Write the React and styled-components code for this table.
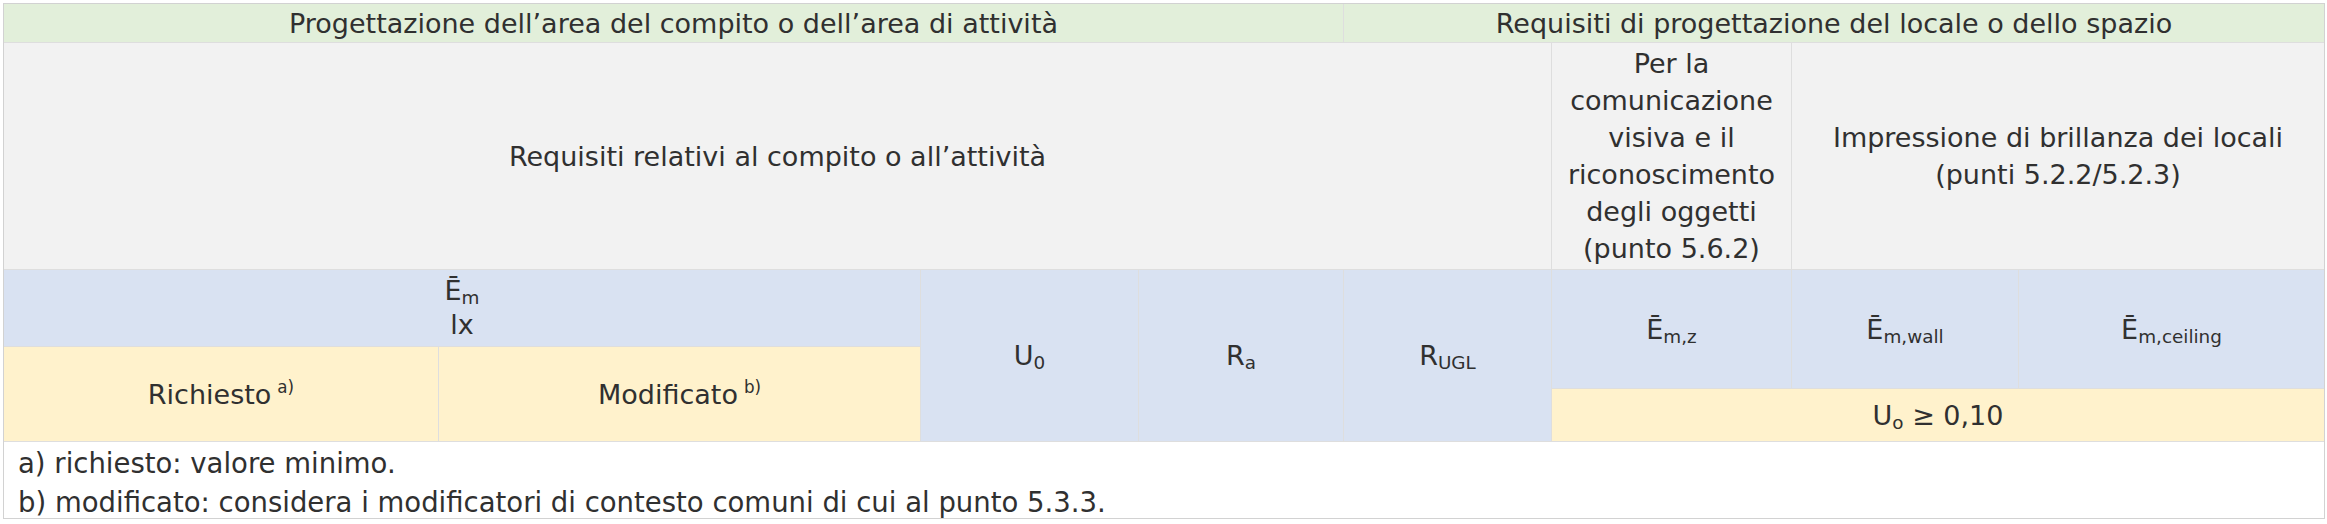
import React from 'react';
import styled, { createGlobalStyle } from 'styled-components';

const GlobalStyle = createGlobalStyle`
  body {
    margin: 0;
    background: #fff;
  }
`;

const Page = styled.div`
  padding: 3px;
`;

const Table = styled.div`
  display: grid;
  grid-template-columns: 434px 481px 217px 204px 207px 239px 226px 305px;
  grid-template-rows: 38px 226px 76px 41px 52px 76px;
  gap: 1px;
  width: 2322px;
  box-sizing: border-box;
  background: #dedede;
  border: 1px solid #d2d2d2;
  font-family: "DejaVu Sans", "Liberation Sans", sans-serif;
  font-size: 27px;
  line-height: 37px;
  color: #303030;
`;

const tones = {
  green: '#e2efda',
  gray: '#f2f2f2',
  blue: '#d9e2f2',
  yellow: '#fff2cc',
  white: '#fff',
};

const Cell = styled.div`
  grid-column: ${(p) => p.col};
  grid-row: ${(p) => p.row};
  background: ${(p) => tones[p.tone]};
  display: flex;
  flex-direction: column;
  align-items: center;
  justify-content: center;
  text-align: center;
  overflow: hidden;
`;

const Notes = styled(Cell)`
  align-items: flex-start;
  text-align: left;
  padding: 5px 14px 0;
  line-height: 39px;
  font-size: 27.5px;
`;

const Sub = styled.sub`
  font-size: 0.68em;
  line-height: 0;
  vertical-align: -0.2em;
`;

const Sup = styled.sup`
  font-size: 0.62em;
  line-height: 0;
  vertical-align: 0.6em;
  margin-left: 6px;
`;

const Line = styled.span`
  display: block;
`;

const Stack = styled.div`
  line-height: 34px;
`;

export default function App() {
  return (
    <>
      <GlobalStyle />
      <Page>
        <Table>
          <Cell col="1 / 5" row="1" tone="green">
            Progettazione dell’area del compito o dell’area di attività
          </Cell>
          <Cell col="5 / 9" row="1" tone="green">
            Requisiti di progettazione del locale o dello spazio
          </Cell>

          <Cell col="1 / 6" row="2" tone="gray">
            Requisiti relativi al compito o all’attività
          </Cell>
          <Cell col="6 / 7" row="2" tone="gray">
            <Line>Per la</Line>
            <Line>comunicazione</Line>
            <Line>visiva e il</Line>
            <Line>riconoscimento</Line>
            <Line>degli oggetti</Line>
            <Line>(punto 5.6.2)</Line>
          </Cell>
          <Cell col="7 / 9" row="2" tone="gray">
            <Line>Impressione di brillanza dei locali</Line>
            <Line>(punti 5.2.2/5.2.3)</Line>
          </Cell>

          <Cell col="1 / 3" row="3" tone="blue">
            <Stack>
              <Line>
                Ē<Sub>m</Sub>
              </Line>
              <Line>lx</Line>
            </Stack>
          </Cell>
          <Cell col="1" row="4 / 6" tone="yellow">
            <span>
              Richiesto<Sup>a)</Sup>
            </span>
          </Cell>
          <Cell col="2" row="4 / 6" tone="yellow">
            <span>
              Modificato<Sup>b)</Sup>
            </span>
          </Cell>

          <Cell col="3" row="3 / 6" tone="blue">
            <span>
              U<Sub>0</Sub>
            </span>
          </Cell>
          <Cell col="4" row="3 / 6" tone="blue">
            <span>
              R<Sub>a</Sub>
            </span>
          </Cell>
          <Cell col="5" row="3 / 6" tone="blue">
            <span>
              R<Sub>UGL</Sub>
            </span>
          </Cell>

          <Cell col="6" row="3 / 5" tone="blue">
            <span>
              Ē<Sub>m,z</Sub>
            </span>
          </Cell>
          <Cell col="7" row="3 / 5" tone="blue">
            <span>
              Ē<Sub>m,wall</Sub>
            </span>
          </Cell>
          <Cell col="8" row="3 / 5" tone="blue">
            <span>
              Ē<Sub>m,ceiling</Sub>
            </span>
          </Cell>
          <Cell col="6 / 9" row="5" tone="yellow">
            <span>
              U<Sub>o</Sub> ≥ 0,10
            </span>
          </Cell>

          <Notes col="1 / 9" row="6" tone="white">
            <Line>a) richiesto: valore minimo.</Line>
            <Line>b) modificato: considera i modificatori di contesto comuni di cui al punto 5.3.3.</Line>
          </Notes>
        </Table>
      </Page>
    </>
  );
}
